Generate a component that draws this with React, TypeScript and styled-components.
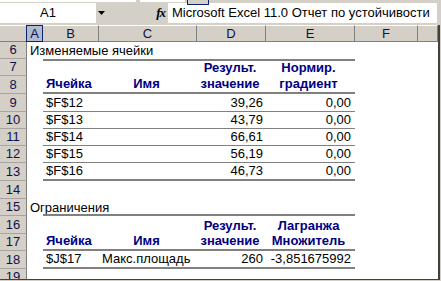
import React from "react";
import styled, { createGlobalStyle } from "styled-components";

type Row = {
    n: number,
    h: number,
    a?: string,
    b?: string,
    c?: string,
    d?: string,
    e?: string,
    head?: boolean,
    top?: 'thick' | 'thin',
    bottom?: 'thick' | 'thin'
};

const COLS = [
    {name: 'A', w: 16},
    {name: 'B', w: 56},
    {name: 'C', w: 98},
    {name: 'D', w: 69},
    {name: 'E', w: 89},
    {name: 'F', w: 63},
    {name: '', w: 20},
];

const ROWS: Row[] = [
    {n: 6, h: 17, a: 'Изменяемые ячейки'},
    {n: 7, h: 17, d: 'Результ.', e: 'Нормир.', head: true, top: 'thick'},
    {n: 8, h: 18, b: 'Ячейка', c: 'Имя', d: 'значение', e: 'градиент', head: true, bottom: 'thick'},
    {n: 9, h: 18, b: '$F$12', d: '39,26', e: '0,00', bottom: 'thin'},
    {n: 10, h: 17, b: '$F$13', d: '43,79', e: '0,00', bottom: 'thin'},
    {n: 11, h: 17, b: '$F$14', d: '66,61', e: '0,00', bottom: 'thin'},
    {n: 12, h: 17, b: '$F$15', d: '56,19', e: '0,00', bottom: 'thin'},
    {n: 13, h: 18, b: '$F$16', d: '46,73', e: '0,00', bottom: 'thick'},
    {n: 14, h: 18},
    {n: 15, h: 17, a: 'Ограничения', bottom: 'thick'},
    {n: 16, h: 18, d: 'Результ.', e: 'Лагранжа', head: true},
    {n: 17, h: 17, b: 'Ячейка', c: 'Имя', d: 'значение', e: 'Множитель', head: true, bottom: 'thick'},
    {n: 18, h: 18, b: '$J$17', c: 'Макс.площадь', d: '260', e: '-3,851675992', bottom: 'thick'},
    {n: 19, h: 17},
];

export default function App() {
    return (
        <Window>
            <GlobalStyle/>
            <Toolbar>
                <ToolbarField $w={136}/>
                <ToolbarGap $w={4}/>
                <ToolbarField $w={45}/>
                <ToolbarButton/>
            </Toolbar>
            <FormulaBar>
                <NameBox>A1</NameBox>
                <DropButton>
                    <svg width="7" height="4" viewBox="0 0 7 4">
                        <path d="M0 0h7L3.5 4z" fill="#000"/>
                    </svg>
                </DropButton>
                <FxLabel>fx</FxLabel>
                <FormulaInput>Microsoft Excel 11.0 Отчет по устойчивости</FormulaInput>
            </FormulaBar>
            <Sheet $rows={ROWS.map(r => r.h)}>
                <Corner/>
                {COLS.map((c, i) => (
                    <ColHead key={'h' + i} $selected={c.name === 'A'}>{c.name}</ColHead>
                ))}
                {ROWS.map(r => (
                    <React.Fragment key={r.n}>
                        <RowHead>{r.n}</RowHead>
                        <Cell $pad="left">{r.a}</Cell>
                        <Cell $pad="left" $head={r.head} $top={r.top} $bottom={r.bottom}>{r.b}</Cell>
                        <Cell $align={r.head ? 'center' : 'left'} $head={r.head} $top={r.top} $bottom={r.bottom}>{r.c}</Cell>
                        <Cell $align={r.head ? 'center' : 'right'} $head={r.head} $top={r.top} $bottom={r.bottom}>{r.d}</Cell>
                        <Cell $align={r.head ? 'center' : 'right'} $head={r.head} $top={r.top} $bottom={r.bottom} $wide>{r.e}</Cell>
                        <Cell/>
                        <Cell/>
                    </React.Fragment>
                ))}
            </Sheet>
        </Window>
    );
}

//style

const GlobalStyle = createGlobalStyle`
    html, body {
        margin: 0;
        padding: 0;
        background: #d4d0c8;
    }
    body {
        font-family: "Liberation Sans", Arial, sans-serif;
        font-size: 13px;
    }
`;

const Window = styled.div`
    width: 441px;
    height: 281px;
    overflow: hidden;
    background: #d4d0c8;
    display: flex;
    flex-direction: column;
`;

const Toolbar = styled.div`
    height: 3px;
    display: flex;
    flex-direction: row;
    align-items: flex-start;
    overflow: visible;
    position: relative;
    z-index: 2;
`;

const ToolbarField = styled.div<{ $w: number }>`
    width: ${p => p.$w}px;
    height: 2px;
    background: #fff;
`;

const ToolbarGap = styled.div<{ $w: number }>`
    width: ${p => p.$w}px;
`;

const ToolbarButton = styled.div`
    width: 20px;
    height: 4px;
    margin-left: 2px;
    border: 1px solid #0a246a;
    border-top: none;
    background: #d4d0c8;
    flex-shrink: 0;
`;

const FormulaBar = styled.div`
    height: 22px;
    display: flex;
    flex-direction: row;
    align-items: flex-start;
`;

const NameBox = styled.div`
    width: 96px;
    height: 20px;
    background: #fff;
    text-align: center;
    line-height: 20px;
    color: #000;
`;

const DropButton = styled.div`
    width: 16px;
    height: 20px;
    display: flex;
    align-items: center;
    justify-content: center;
    padding-right: 6px;
    box-sizing: border-box;
`;

const FxLabel = styled.div`
    width: 56px;
    height: 20px;
    line-height: 20px;
    text-align: right;
    padding-right: 3px;
    box-sizing: border-box;
    font-family: "Liberation Serif", "Times New Roman", serif;
    font-style: italic;
    font-weight: 700;
    font-size: 13px;
    letter-spacing: -1px;
    color: #000;
`;

const FormulaInput = styled.div`
    flex: 1;
    margin-right: 4px;
    height: 20px;
    line-height: 20px;
    background: #fff;
    padding-left: 4px;
    white-space: nowrap;
    overflow: hidden;
    color: #000;
`;

const Sheet = styled.div<{ $rows: number[] }>`
    width: 440px;
    height: 255px;
    box-sizing: border-box;
    border-right: 2px solid #404040;
    border-bottom: 1px solid #404040;
    background: #fff;
    display: grid;
    grid-template-columns: 27px ${COLS.map(c => c.w + 'px').join(' ')};
    grid-template-rows: 17px ${p => p.$rows.map(h => h + 'px').join(' ')};
    overflow: hidden;
`;

const Corner = styled.div`
    background: #d4d0c8;
    border-right: 1px solid #808080;
    border-bottom: 1px solid #808080;
    border-top: 1px solid #fff;
`;

const ColHead = styled.div<{ $selected?: boolean }>`
    background: ${p => p.$selected ? '#b2bbd4' : '#d4d0c8'};
    border-right: 1px solid ${p => p.$selected ? '#0a246a' : '#808080'};
    border-bottom: 1px solid ${p => p.$selected ? '#0a246a' : '#808080'};
    border-top: 1px solid ${p => p.$selected ? '#0a246a' : '#fff'};
    border-left: ${p => p.$selected ? '1px solid #0a246a' : 'none'};
    margin-left: ${p => p.$selected ? '-1px' : '0'};
    display: flex;
    align-items: center;
    justify-content: center;
    color: #10104a;
    font-size: 13px;
`;

const RowHead = styled.div`
    background: #d4d0c8;
    border-right: 1px solid #808080;
    border-bottom: 1px solid #a8a5a0;
    display: flex;
    align-items: flex-end;
    justify-content: center;
    line-height: 15px;
    padding-bottom: 1px;
    color: #10104a;
    font-size: 13px;
`;

const Cell = styled.div<{
    $align?: 'left' | 'center' | 'right',
    $pad?: 'left',
    $head?: boolean,
    $top?: 'thick' | 'thin',
    $bottom?: 'thick' | 'thin',
    $wide?: boolean
}>`
    display: flex;
    align-items: flex-end;
    justify-content: ${p => p.$align === 'right' ? 'flex-end' : p.$align === 'center' ? 'center' : 'flex-start'};
    padding: 0 ${p => p.$wide ? 4 : 3}px 1px ${p => p.$pad || p.$align === 'left' ? 3 : 0}px;
    line-height: 15px;
    white-space: nowrap;
    overflow: visible;
    color: ${p => p.$head ? '#000080' : '#000'};
    font-weight: ${p => p.$head ? 700 : 400};
    border-top: ${p => p.$top === 'thick' ? '2px solid #808080' : p.$top === 'thin' ? '1px solid #808080' : 'none'};
    border-bottom: ${p => p.$bottom === 'thick' ? '2px solid #808080' : p.$bottom === 'thin' ? '1px solid #808080' : 'none'};
    min-width: 0;
`;
